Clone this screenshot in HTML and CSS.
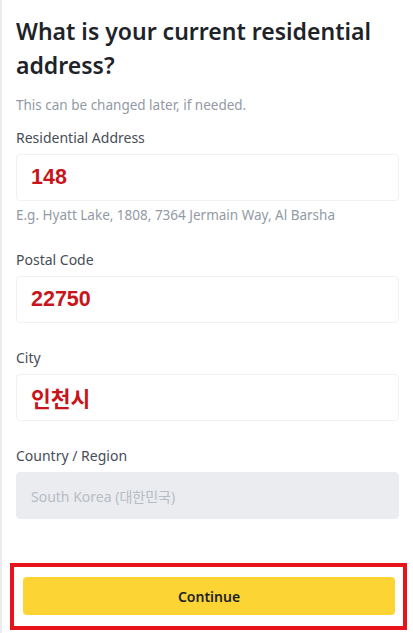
FILE: index.html
```html
<!DOCTYPE html>
<html lang="en">
  <head>
    <meta charset="UTF-8" />
    <meta name="viewport" content="width=device-width, initial-scale=1.0" />
    <title>Residential address</title>
    <link rel="stylesheet" href="styles.css">
  </head>

  <body>
    <div class="page">
      <h1>What is your current residential address?</h1>
      <p class="subtitle">This can be changed later, if needed.</p>

      <!-- Поля адреса -->
      <div class="field">
        <label class="field-label">Residential Address</label>
        <div class="input"><span class="filled">148</span></div>
        <p class="hint">E.g. Hyatt Lake, 1808, 7364 Jermain Way, Al Barsha</p>
      </div>

      <div class="field">
        <label class="field-label">Postal Code</label>
        <div class="input"><span class="filled">22750</span></div>
      </div>

      <div class="field">
        <label class="field-label">City</label>
        <div class="input"><span class="filled">인천시</span></div>
      </div>

      <div class="field">
        <label class="field-label">Country / Region</label>
        <div class="input disabled">South Korea (대한민국)</div>
      </div>

      <div class="highlight">
        <button class="continue-btn">Continue</button>
      </div>
    </div>
  </body>
</html>
```

FILE: styles.css
```css
body {
  margin: 0;
  background-color: #ffffff;
  font-family: "Noto Sans", "Noto Sans CJK KR", sans-serif;
  color: #1e2329;
  border-left: 2px solid #ececec;
  min-height: 633px;
  box-sizing: border-box;
}

.page {
  padding: 14px 14px 0 14px;
}

h1 {
  margin: 0;
  font-size: 23px;
  line-height: 34px;
  font-weight: 600;
  color: #1e2329;
}

.subtitle {
  margin: 13px 0 13px;
  font-size: 13.5px;
  line-height: 20px;
  color: #929aa5;
}

.field {
  margin-bottom: 25px;
}

.field-label {
  display: block;
  font-size: 14px;
  line-height: 20px;
  color: #474d57;
  margin-bottom: 6px;
}

.input {
  height: 47px;
  box-sizing: border-box;
  padding: 0 14px;
  display: flex;
  align-items: center;
  border: 1px solid #f1f1f1;
  border-radius: 4px;
  background-color: #fff;
}

.filled {
  font-family: "Liberation Sans", "Noto Sans CJK KR", sans-serif;
  font-weight: bold;
  font-size: 21.5px;
  color: #c8141a;
}

.input.disabled {
  background-color: #eaecef;
  border-color: #eaecef;
  color: #b7bdc6;
  font-size: 14px;
}

.hint {
  margin: 4px 0 0;
  font-size: 13.5px;
  line-height: 20px;
  color: #929aa5;
}

/* Красная рамка вокруг кнопки */
.highlight {
  margin: 44px -8px 0 -6px;
  border: 4px solid #e8141c;
  padding: 10px 8px 11px 9px;
}

.continue-btn {
  display: block;
  width: 100%;
  height: 38px;
  border: none;
  border-radius: 4px;
  background-color: #fcd535;
  color: #1e2329;
  font-family: "Noto Sans", sans-serif;
  font-size: 14px;
  font-weight: 600;
}
```
